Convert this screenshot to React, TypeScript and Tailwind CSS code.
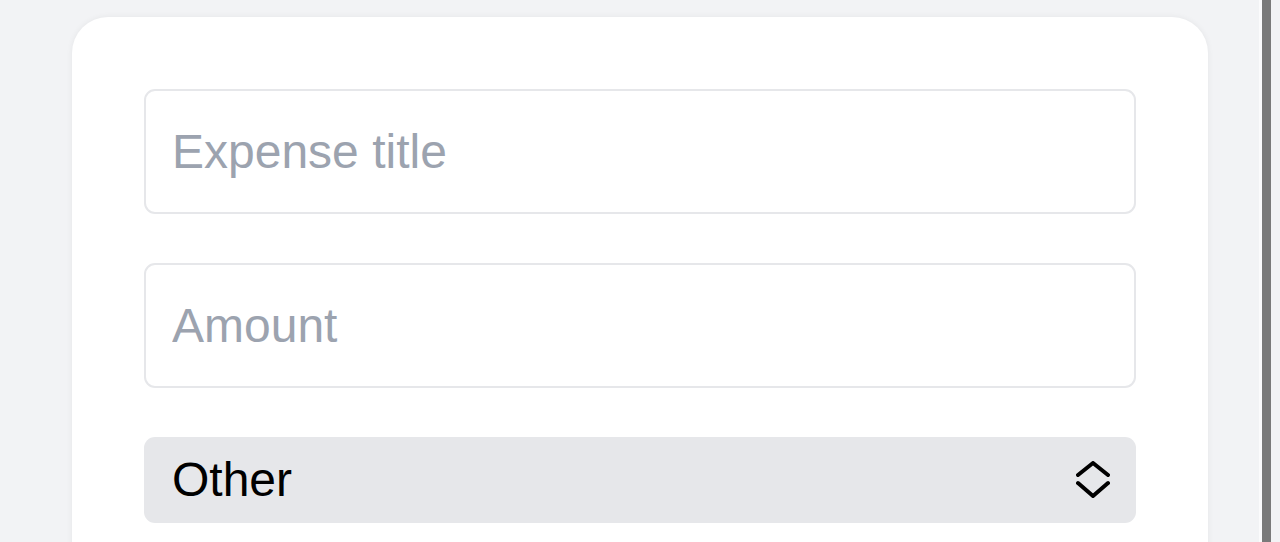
const fieldFont = "font-['Liberation_Sans',Arial,sans-serif]";

function UpDownIcon() {
  return (
    <svg width="34" height="38" viewBox="0 0 34 38" fill="none" className="shrink-0">
      <path
        d="M2 14 L17 2 L32 14"
        stroke="#000"
        strokeWidth="4"
        strokeLinecap="round"
        strokeLinejoin="round"
      />
      <path
        d="M2 22 L17 35 L32 22"
        stroke="#000"
        strokeWidth="4"
        strokeLinecap="round"
        strokeLinejoin="round"
      />
    </svg>
  );
}

export default function App() {
  return (
    <div className="flex h-[542px] w-[1280px] overflow-hidden bg-[#f2f3f5]">
      <div className="flex-1 pl-[72px] pr-[51px] pt-[17px]">
        <div className="flex flex-col gap-[49px] rounded-[36px] bg-white px-[72px] pt-[72px] pb-[72px] shadow-[0_0_6px_rgba(0,0,0,0.06)]">
          <input
            type="text"
            placeholder="Expense title"
            className={`${fieldFont} h-[125px] w-full rounded-[11px] border-2 border-[#e6e7ea] px-[26px] text-[48px] text-black outline-none placeholder:text-[#9ca3af]`}
          />
          <input
            type="text"
            placeholder="Amount"
            className={`${fieldFont} h-[125px] w-full rounded-[11px] border-2 border-[#e6e7ea] px-[26px] text-[48px] text-black outline-none placeholder:text-[#9ca3af]`}
          />
          <div
            className={`${fieldFont} flex h-[86px] w-full items-center justify-between rounded-[11px] bg-[#e6e7ea] pl-[28px] pr-[26px] text-[48px] text-black`}
          >
            <span>Other</span>
            <UpDownIcon />
          </div>
        </div>
      </div>
      <div className="flex w-[21px]">
        <div className="w-[3px] bg-[#fbfbfc]" />
        <div className="w-[9px] bg-[#7a7a7a]" />
        <div className="flex-1 bg-[#f2f3f5]" />
      </div>
    </div>
  );
}
